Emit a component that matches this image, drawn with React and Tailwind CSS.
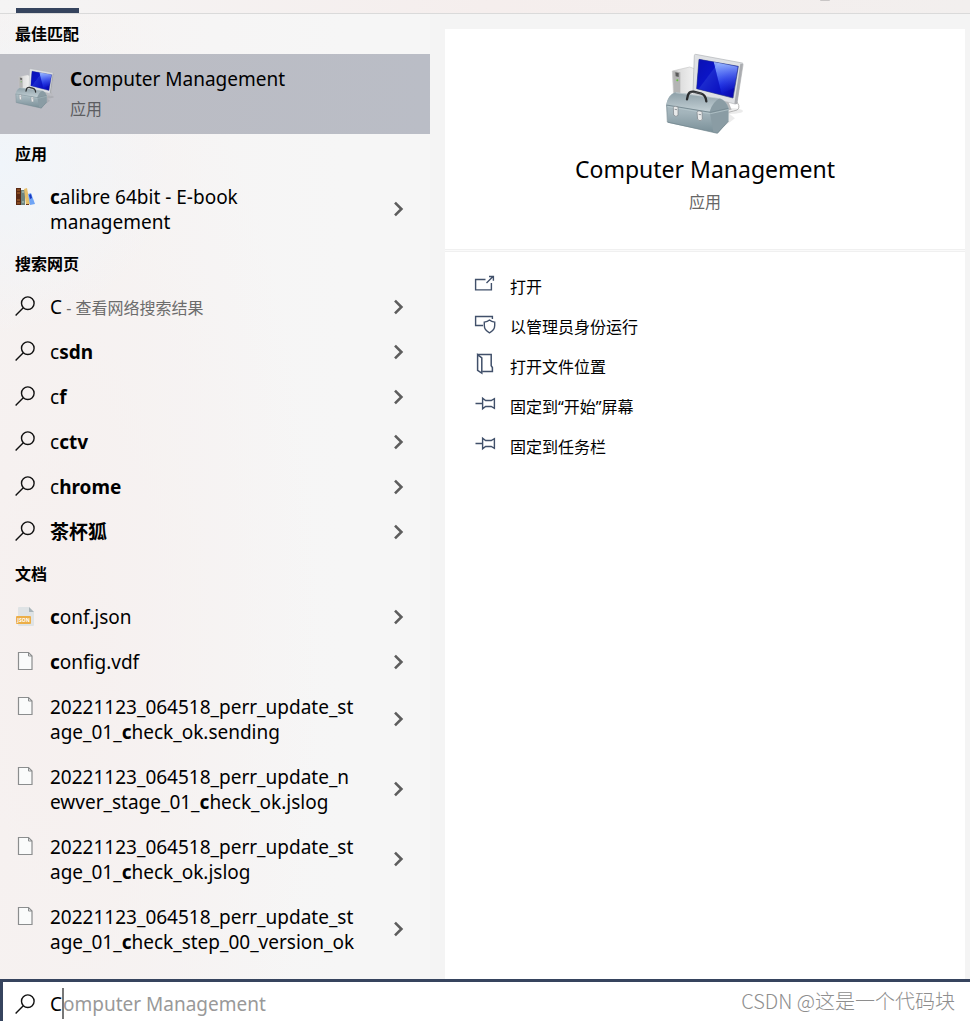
import React, { useId, useState } from "react";

const webResults = [
  { lead: "C", rest: "", note: "查看网络搜索结果" },
  { lead: "c", rest: "sdn" },
  { lead: "c", rest: "f" },
  { lead: "c", rest: "ctv" },
  { lead: "c", rest: "hrome" },
  { lead: "", rest: "茶杯狐" },
];

const documents = [
  { kind: "json", lines: [["", "c", "onf.json"]] },
  { kind: "file", lines: [["", "c", "onfig.vdf"]] },
  { kind: "file", lines: [["20221123_064518_perr_update_st", "", ""], ["age_01_", "c", "heck_ok.sending"]] },
  { kind: "file", lines: [["20221123_064518_perr_update_n", "", ""], ["ewver_stage_01_", "c", "heck_ok.jslog"]] },
  { kind: "file", lines: [["20221123_064518_perr_update_st", "", ""], ["age_01_", "c", "heck_ok.jslog"]] },
  { kind: "file", lines: [["20221123_064518_perr_update_st", "", ""], ["age_01_", "c", "heck_step_00_version_ok"]] },
];

function ComputerIcon({ className }) {
  const id = useId();
  return (
    <svg viewBox="72 38 240 246" className={className} aria-hidden="true">
      <defs>
        <linearGradient id={`${id}screen`} x1="0" y1="0" x2="1" y2="0.7">
          <stop offset="0" stopColor="#0a12a8" />
          <stop offset="0.38" stopColor="#0c1fe0" />
          <stop offset="0.4" stopColor="#3a5cf5" />
          <stop offset="0.7" stopColor="#1220d8" />
          <stop offset="1" stopColor="#0808b0" />
        </linearGradient>
        <linearGradient id={`${id}glow`} x1="0" y1="0" x2="0" y2="1">
          <stop offset="0" stopColor="#a8c4ff" stopOpacity="0.9" />
          <stop offset="1" stopColor="#3050ff" stopOpacity="0" />
        </linearGradient>
        <linearGradient id={`${id}front`} x1="0" y1="0" x2="0" y2="1">
          <stop offset="0" stopColor="#b4c2c8" />
          <stop offset="0.5" stopColor="#a3b4bb" />
          <stop offset="1" stopColor="#788e97" />
        </linearGradient>
        <linearGradient id={`${id}lid`} x1="0" y1="0" x2="0" y2="1">
          <stop offset="0" stopColor="#8d9fa7" />
          <stop offset="1" stopColor="#c3d0d5" />
        </linearGradient>
        <linearGradient id={`${id}tower`} x1="0" y1="0" x2="1" y2="0">
          <stop offset="0" stopColor="#b5b5b5" />
          <stop offset="0.28" stopColor="#dcdcdc" />
          <stop offset="1" stopColor="#f2f2f2" />
        </linearGradient>
      </defs>
      <ellipse cx="268" cy="212" rx="38" ry="9" fill="#000" opacity="0.08" />
      <path d="M240 266 L282 234 L262 218 Z" fill="#000" opacity="0.08" />
      <path d="M94 92 L146 80 L162 86 L162 170 L98 170 Z" fill={`url(#${id}tower)`} stroke="#c8c8c8" strokeWidth="2" />
      <path d="M98 93 L118 96 L118 165 L99 160 Z" fill="#b4b4b4" />
      <path d="M103 96 L113 98 L113 110 L104 108 Z" fill="#5b5b5b" />
      <circle cx="109" cy="120" r="3" fill="#65c23f" />
      <path d="M288 185 Q304 208 278 212 L262 216" fill="none" stroke="#b5b5b5" strokeWidth="3" />
      <path d="M226 180 L262 184 L272 208 L240 212 Z" fill="#b9babc" />
      <path d="M164 42 L304 68 Q307 69 306 74 L288 188 Q287 192 282 191 L158 160 Q155 159 156 154 L160 46 Q160 42 164 42 Z" fill="#dfe1e4" stroke="#b1b3b6" strokeWidth="2" />
      <path d="M306 70 L288 191 L280 190 L298 70 Z" fill="#aaacb0" />
      <path d="M174 57 L292 78 L276 173 L167 145 Z" fill={`url(#${id}screen)`} stroke="#34427f" strokeWidth="2" />
      <path d="M218 65 L290 79 L280 142 L242 160 Z" fill={`url(#${id}glow)`} />
      <path d="M174 57 L218 65 L242 163 L167 145 Z" fill="#0b0fb8" opacity="0.65" />
      <path d="M103 156 L240 175 Q258 184 263 204 L262 243 L230 279 L80 247 L76 190 Q82 163 103 156 Z" fill={`url(#${id}front)`} />
      <path d="M103 156 L235 174 Q215 184 206 214 L76 194 Q80 165 103 156 Z" fill={`url(#${id}lid)`} />
      <path d="M235 174 Q256 181 262 204 L262 242 L229 279 L217 276 L206 214 Q216 184 235 174 Z" fill="#8a9ca4" />
      <path d="M76 194 L208 216 L262 204" fill="none" stroke="#7a8d95" strokeWidth="3" />
      <path d="M76 198 L208 220 L262 208" fill="none" stroke="#bdcdd2" strokeWidth="2" />
      <path d="M77 194 L79 245 L229 279 L262 243" fill="none" stroke="#71858d" strokeWidth="2" />
      <path d="M104 157 L236 174" fill="none" stroke="#d1dadd" strokeWidth="2" />
      <path d="M138 177 L141 164 Q144 153 158 154 L181 160 Q194 164 196 183" fill="none" stroke="#292b2d" strokeWidth="7" strokeLinejoin="round" strokeLinecap="round" />
      <path d="M146 156 Q162 153 184 161" fill="none" stroke="#5f6264" strokeWidth="2" />
      <path d="M97 202 Q97 197 103 198 L111 200 L111 225 Q105 232 98 224 Z" fill="#e9eaea" stroke="#798187" strokeWidth="2" />
      <path d="M168 215 Q170 211 175 212 L183 214 L184 237 Q177 246 170 237 Z" fill="#e9eaea" stroke="#798187" strokeWidth="2" />
      <path d="M101 207 L108 208 M173 222 L180 223" stroke="#92999e" strokeWidth="3" />
    </svg>
  );
}

function BooksIcon() {
  return (
    <svg viewBox="0 0 20 20" className="size-5" aria-hidden="true">
      <path d="M1 1h5v17H1z" fill="#5a2a14" />
      <path d="M2 3h3M2 6h3M2 13h3M2 16h3" stroke="#b06a2c" />
      <path d="M6 3h4v15H6z" fill="#6d8580" />
      <path d="M7 5h2M7 15h2" stroke="#bfd0c4" />
      <path d="m9 2 3-1 3 16-4 1z" fill="#e6bf69" />
      <path d="M11 17h3v1h-3z" fill="#6d3518" />
      <path d="m13 7 3-1 4 11-5 1z" fill="#6fa4f5" />
      <path d="m14 8 2-1 1 4-2 1z" fill="#1739c4" />
    </svg>
  );
}

function SearchIcon() {
  return (
    <svg viewBox="0 0 20 20" className="size-5" fill="none" stroke="#111" strokeWidth="1.4" aria-hidden="true">
      <circle cx="12.8" cy="7.2" r="6.3" />
      <path d="M8.3 11.7.6 19.5" />
    </svg>
  );
}

function FileIcon() {
  return (
    <svg viewBox="0 0 20 20" className="size-5" fill="none" aria-hidden="true">
      <path d="M3.5 1.5h10l3.5 3.5v13.5H3.5z" fill="#fafbfb" stroke="#8b8d8e" strokeWidth="1.2" />
      <path d="M13.5 1.5V5H17" stroke="#8b8d8e" />
    </svg>
  );
}

function JsonIcon() {
  return (
    <svg viewBox="0 0 20 20" className="size-5" aria-hidden="true">
      <path d="M4 0h10l5 5v13q0 1-1 1H4q-1 0-1-1V1q0-1 1-1z" fill="#dfe3e5" />
      <path d="M14 0l5 5h-5z" fill="#a9b4b9" />
      <rect x="1" y="9" width="15" height="8" rx="1" fill="#ecae48" />
      <text x="8.5" y="15" textAnchor="middle" fill="#fff" fontSize="5" fontWeight="700" fontFamily="Open Sans, sans-serif">JSON</text>
    </svg>
  );
}

function Chevron() {
  return (
    <svg viewBox="0 0 16 16" className="size-4" fill="none" stroke="#5d5d5d" strokeWidth="2.6" aria-hidden="true">
      <path d="M4 1.600 10.400 8 4 14.400" />
    </svg>
  );
}

function OpenIcon() {
  return (
    <svg viewBox="0 0 22 22" className="size-[22px]" fill="none" stroke="#41506a" strokeWidth="1.4" aria-hidden="true">
      <path d="M11.5 6.500H1.600v10.400h15.800V10" />
      <path d="m12.500 10 6.500-6.500M15 3.500h4.400v4.300" />
    </svg>
  );
}

function AdminIcon() {
  return (
    <svg viewBox="0 0 22 22" className="size-[22px]" fill="none" stroke="#41506a" strokeWidth="1.4" aria-hidden="true">
      <path d="M9 12.500H1.600v-9h16.800v2.600" />
      <path d="M15.500 7.100c-1.500 1.400-3 1.900-5.200 2v3.500c0 3.400 2 5.700 5.200 7.200 3.200-1.500 5.200-3.800 5.200-7.200V9.100c-2.200-.1-3.700-.6-5.200-2z" />
    </svg>
  );
}

function FolderIcon() {
  return (
    <svg viewBox="0 0 22 22" className="size-[22px]" fill="none" stroke="#41506a" strokeWidth="1.500" aria-hidden="true">
      <path d="M3.600 1.600h13.600v11.200l1.200 1.700v3.900H8.200" />
      <path d="m3.600 1.600 4.200 3.300v15.300l-4.200-2.800z" />
    </svg>
  );
}

function PinIcon() {
  return (
    <svg viewBox="0 0 22 22" className="size-[22px]" fill="none" stroke="#41506a" strokeWidth="1.4" aria-hidden="true">
      <path d="M1.500 10.500h7.100M8.600 5.200v10.600l3-2.300h5.600l3.200 1.800V5.700l-3.200 1.800h-5.600z" />
    </svg>
  );
}

const actions = [
  { label: "打开", Icon: OpenIcon },
  { label: "以管理员身份运行", Icon: AdminIcon },
  { label: "打开文件位置", Icon: FolderIcon },
  { label: "固定到“开始”屏幕", Icon: PinIcon },
  { label: "固定到任务栏", Icon: PinIcon },
];

function Heading({ children }) {
  return <h2 className="flex h-10 items-center pl-[15px] text-base font-bold">{children}</h2>;
}

function ResultRow({ icon, children }) {
  return (
    <li className="flex">
      <button type="button" className="flex min-w-0 flex-1 items-start gap-[15px] pt-[11px] pb-[9px] pl-[15px] text-left text-[19px] leading-[25px]">
        <span className="shrink-0 pt-px">{icon}</span>
        <span className="min-w-0">{children}</span>
      </button>
      <button type="button" aria-label="展开" className="flex w-[39px] shrink-0 items-center">
        <Chevron />
      </button>
    </li>
  );
}

export default function App() {
  const [query, setQuery] = useState("C");
  return (
    <div className="flex min-h-screen flex-col bg-[#f4f4f4] font-['Noto_Sans','Noto_Sans_CJK_SC',sans-serif] text-black">
      <header className="flex h-[14px] items-end border-b border-[#dadada] bg-gradient-to-r from-[#f5f4f4] via-[#f5eeed] to-[#f2efee] pl-4">
        <span className="h-[5px] w-[63px] bg-[#36445e]" />
        <span className="ml-[741px] h-[13px] w-[10px]">
          <span className="block h-px rounded-b bg-[#c9c6c6]" />
        </span>
      </header>

      <main className="flex flex-1">
        <div className="w-[430px] shrink-0 bg-[radial-gradient(circle_at_0_150px,#f0f5fa_0,transparent_170px),radial-gradient(ellipse_260px_700px_at_60px_650px,#f6f0ef_0,transparent_100%),linear-gradient(to_right,#f6f3f2,#f6f5f5_50%,#f6f6f6_80%)] pb-[14px]">
          <section>
            <Heading>最佳匹配</Heading>
            <button type="button" className="flex h-20 w-full items-start gap-[15px] bg-gradient-to-r from-[#bbbcc3] to-[#babdc6] py-[13px] pl-[15px] text-left">
              <ComputerIcon className="mt-px h-[41px] w-10" />
              <span className="flex flex-col gap-[6px]">
                <span className="text-[19px] leading-[25px]"><b>C</b>omputer Management</span>
                <span className="text-base leading-[22px] text-[#5c5d61]">应用</span>
              </span>
            </button>
          </section>

          <section>
            <Heading>应用</Heading>
            <ul>
              <ResultRow icon={<span className="block pt-px"><BooksIcon /></span>}>
                <b>c</b>alibre 64bit - E-book<br />management
              </ResultRow>
            </ul>
          </section>

          <section>
            <Heading>搜索网页</Heading>
            <ul>
              {webResults.map((r) => (
                <ResultRow key={r.lead + r.rest} icon={<SearchIcon />}>
                  {r.lead}<b>{r.rest}</b>
                  {r.note && <span className="text-base leading-[24px] text-[#6c6c6c]"> - {r.note}</span>}
                </ResultRow>
              ))}
            </ul>
          </section>

          <section>
            <Heading>文档</Heading>
            <ul>
              {documents.map((d, i) => (
                <ResultRow key={i} icon={d.kind === "json" ? <span className="block pt-px"><JsonIcon /></span> : <FileIcon />}>
                  {d.lines.map(([before, match, after]) => (
                    <span key={before + after} className="block">{before}<b>{match}</b>{after}</span>
                  ))}
                </ResultRow>
              ))}
            </ul>
          </section>
        </div>

        <div className="flex min-w-0 flex-1 flex-col pt-[15px] pr-[5px] pl-[15px]">
          <section className="flex h-[220px] flex-col items-center bg-white pt-6">
            <ComputerIcon className="h-[82px] w-20" />
            <h1 className="mt-[18px] text-[23px] leading-[32px]">Computer Management</h1>
            <p className="mt-[5px] text-base leading-[24px] text-[#666]">应用</p>
          </section>
          <hr className="h-[3px] border-y border-[#f0f0f0] bg-[#fafafa]" />
          <section className="flex-1 bg-white pt-[15px]">
            <ul>
              {actions.map(({ label, Icon }) => (
                <li key={label}>
                  <button type="button" className="flex h-10 w-full items-center gap-[14px] pl-[29px] text-left text-base">
                    <span className="pb-[6px]"><Icon /></span>
                    <span>{label}</span>
                  </button>
                </li>
              ))}
            </ul>
          </section>
        </div>
      </main>

      <footer className="flex h-[42px] items-start border-t-[3px] border-l-[3px] border-[#36445e] bg-white pl-3">
        <label htmlFor="search" className="pt-[12px]" aria-label="搜索"><SearchIcon /></label>
        <div className="relative ml-[15px] flex-1">
          <input
            id="search"
            value={query}
            onChange={(e) => setQuery(e.target.value)}
            className="block w-full bg-transparent pt-[10px] text-[19px] leading-[25px] outline-none"
          />
          <span aria-hidden="true" className="pointer-events-none absolute top-0 left-0 flex items-start pt-[6px] text-[19px] text-[#999]">
            <span className="h-[31px] w-[12px]" />
            <span className="-mr-px h-[31px] w-[2px] bg-[#777]" />
            <span className="pt-[4px] leading-[25px]">omputer Management</span>
          </span>
        </div>
        <p className="pt-[5px] pr-[15px] font-['Noto_Sans_CJK_SC',sans-serif] text-[20px] leading-[28px] font-light text-[#8e8e8e]">CSDN @这是一个代码块</p>
      </footer>
    </div>
  );
}
